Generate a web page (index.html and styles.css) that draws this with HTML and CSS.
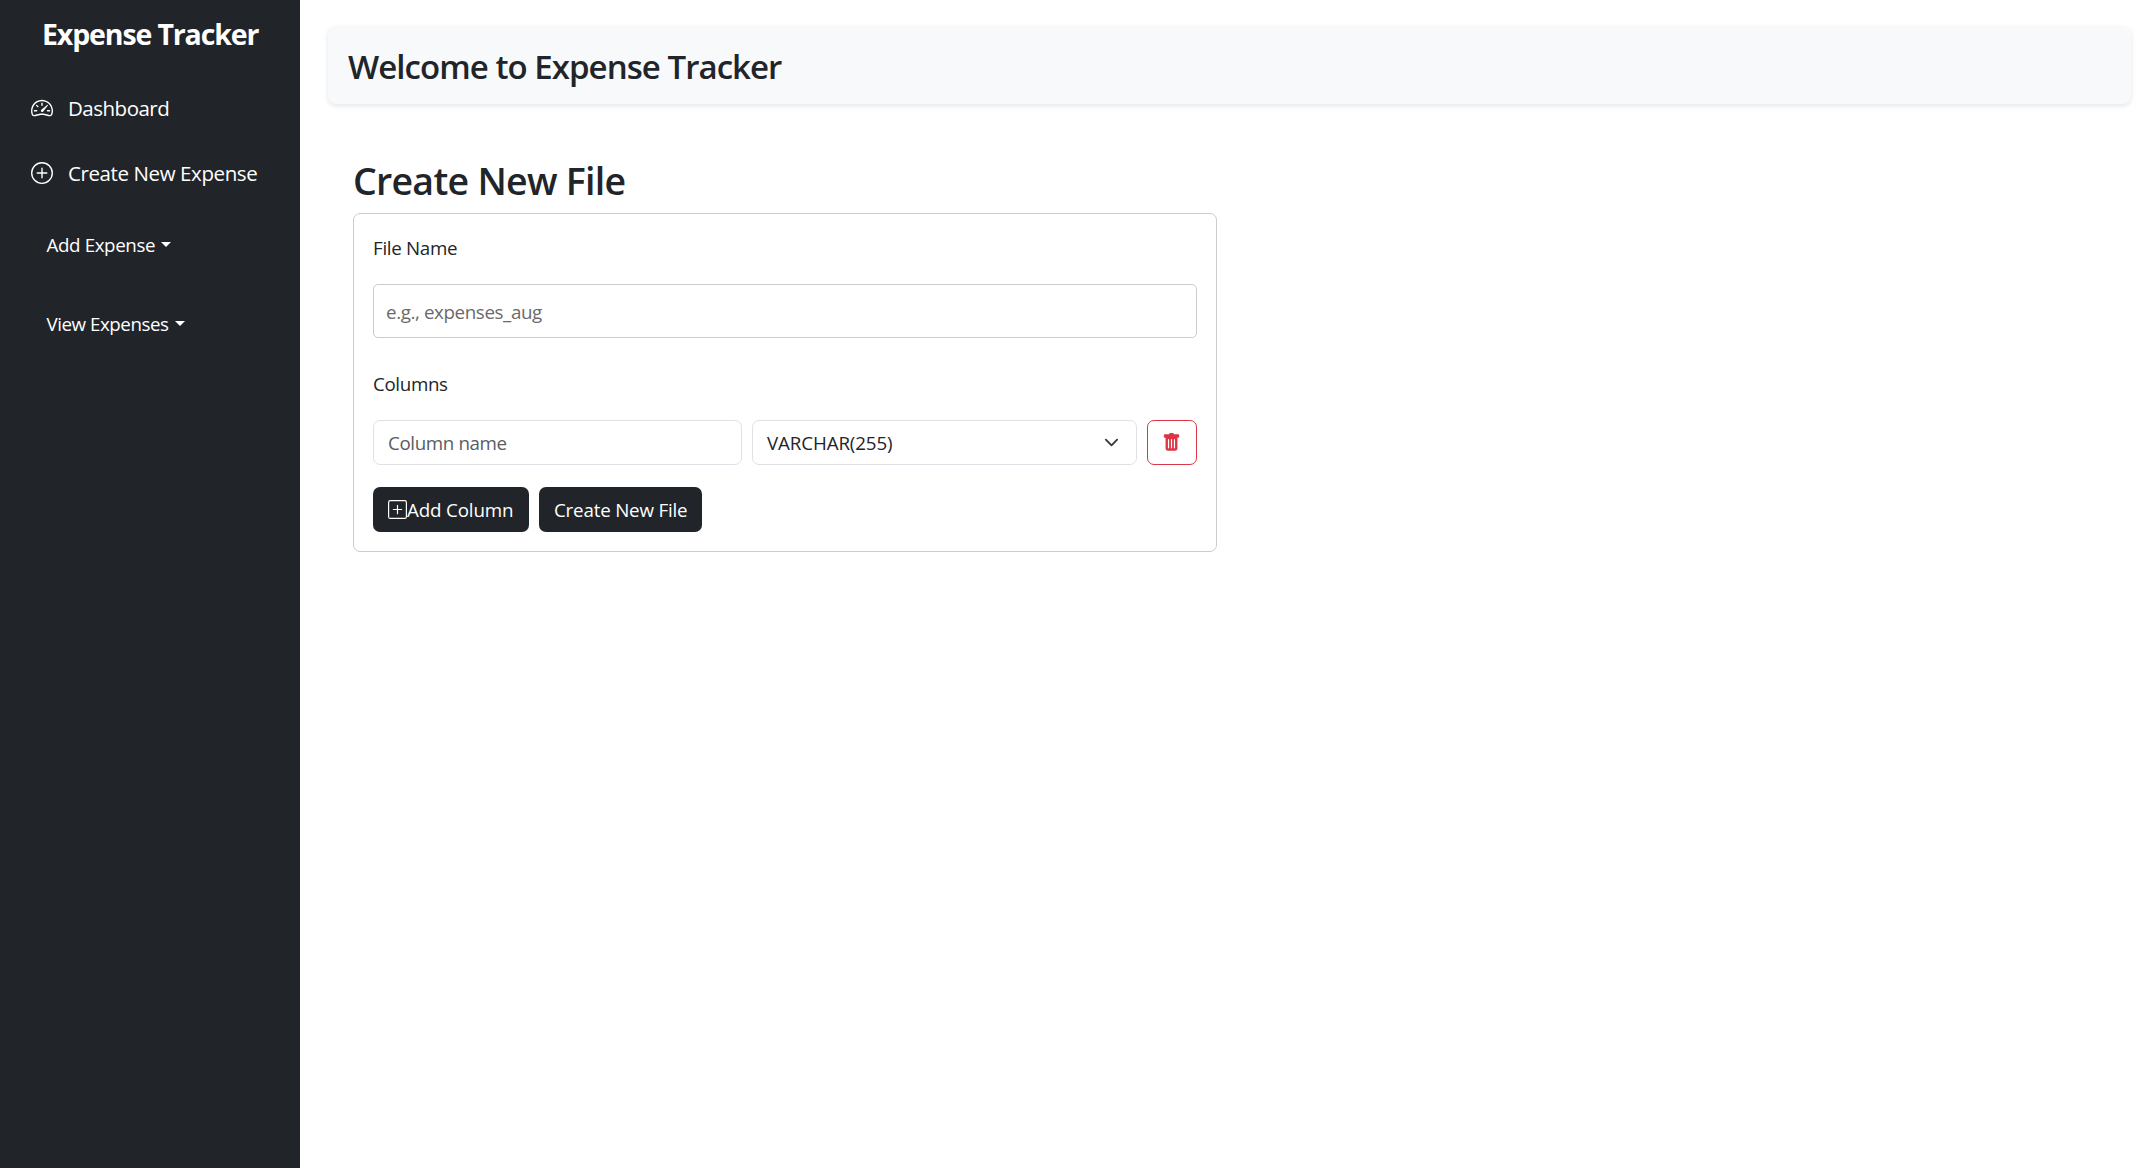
FILE: index.html
```html
<!DOCTYPE html>
<html lang="en">
<head>
<meta charset="utf-8">
<title>Expense Tracker</title>
<link rel="stylesheet" href="styles.css">
</head>
<body>
<div class="layout">
  <aside class="sidebar">
    <div class="brand">Expense Tracker</div>
    <nav class="nav">
      <a class="nav-link">
        <svg class="nav-icon" viewBox="0 0 16 16" fill="currentColor"><path d="M8 4a.5.5 0 0 1 .5.5V6a.5.5 0 0 1-1 0V4.5A.5.5 0 0 1 8 4M3.732 5.732a.5.5 0 0 1 .707 0l.915.914a.5.5 0 1 1-.708.708l-.914-.915a.5.5 0 0 1 0-.707M2 10a.5.5 0 0 1 .5-.5h1.586a.5.5 0 0 1 0 1H2.5A.5.5 0 0 1 2 10m9.5 0a.5.5 0 0 1 .5-.5h1.5a.5.5 0 0 1 0 1H12a.5.5 0 0 1-.5-.5m.754-4.246a.39.39 0 0 0-.527-.02L7.547 9.31a.91.91 0 1 0 1.302 1.258l3.434-4.297a.39.39 0 0 0-.029-.518z"/><path fill-rule="evenodd" d="M0 10a8 8 0 1 1 15.547 2.661c-.442 1.253-1.845 1.602-2.932 1.25C11.309 13.488 9.475 13 8 13c-1.474 0-3.31.488-4.615.911-1.087.352-2.49.003-2.932-1.25A8 8 0 0 1 0 10m8-7a7 7 0 0 0-6.603 9.329c.203.575.923.876 1.68.63C4.397 12.533 6.358 12 8 12s3.604.532 4.923.96c.757.245 1.477-.056 1.68-.631A7 7 0 0 0 8 3"/></svg>
        <span class="nav-dashboard">Dashboard</span>
      </a>
      <a class="nav-link">
        <svg class="nav-icon" viewBox="0 0 16 16" fill="currentColor"><path d="M8 15A7 7 0 1 1 8 1a7 7 0 0 1 0 14m0 1A8 8 0 1 0 8 0a8 8 0 0 0 0 16"/><path d="M8 4a.5.5 0 0 1 .5.5v3h3a.5.5 0 0 1 0 1h-3v3a.5.5 0 0 1-1 0v-3h-3a.5.5 0 0 1 0-1h3v-3A.5.5 0 0 1 8 4"/></svg>
        <span>Create New Expense</span>
      </a>
      <a class="dropdown-toggle">Add Expense</a>
      <a class="dropdown-toggle view">View Expenses</a>
    </nav>
  </aside>
  <main class="main">
    <header class="welcome"><h1>Welcome to Expense Tracker</h1></header>
    <section class="create">
      <h2>Create New File</h2>
      <form class="card">
        <label class="label file-label" for="file">File Name</label>
        <input class="file-input" id="file" type="text" placeholder="e.g., expenses_aug">
        <div class="label columns-label">Columns</div>
        <div class="column-row">
          <input class="column-input" type="text" placeholder="Column name">
          <div class="select">
            <span>VARCHAR(255)</span>
            <svg class="chevron" viewBox="0 0 16 16" fill="none" stroke="#343a40" stroke-width="2" stroke-linecap="round" stroke-linejoin="round"><path d="m2 5 6 6 6-6"/></svg>
          </div>
          <button class="remove" type="button" aria-label="Remove column">
            <svg class="icon" viewBox="0 0 16 16" fill="currentColor"><path d="M2.5 1a1 1 0 0 0-1 1v1a1 1 0 0 0 1 1H3v9a2 2 0 0 0 2 2h6a2 2 0 0 0 2-2V4h.5a1 1 0 0 0 1-1V2a1 1 0 0 0-1-1H10a1 1 0 0 0-1-1H7a1 1 0 0 0-1 1zm3 4a.5.5 0 0 1 .5.5v7a.5.5 0 0 1-1 0v-7a.5.5 0 0 1 .5-.5M8 5a.5.5 0 0 1 .5.5v7a.5.5 0 0 1-1 0v-7A.5.5 0 0 1 8 5m3 .5v7a.5.5 0 0 1-1 0v-7a.5.5 0 0 1 1 0"/></svg>
          </button>
        </div>
        <div class="actions">
          <button class="btn add" type="button">
            <svg class="icon" viewBox="0 0 16 16" fill="currentColor"><path d="M14 1a1 1 0 0 1 1 1v12a1 1 0 0 1-1 1H2a1 1 0 0 1-1-1V2a1 1 0 0 1 1-1zM2 0a2 2 0 0 0-2 2v12a2 2 0 0 0 2 2h12a2 2 0 0 0 2-2V2a2 2 0 0 0-2-2z"/><path d="M8 4a.5.5 0 0 1 .5.5v3h3a.5.5 0 0 1 0 1h-3v3a.5.5 0 0 1-1 0v-3h-3a.5.5 0 0 1 0-1h3v-3A.5.5 0 0 1 8 4"/></svg>
            <span>Add Column</span>
          </button>
          <button class="btn submit" type="button">Create New File</button>
        </div>
      </form>
    </section>
  </main>
</div>
</body>
</html>
```
FILE: styles.css
```css
* { box-sizing: border-box; }

body {
  margin: 0;
  background: #fff;
  color: #212529;
  font-family: "Open Sans", "Noto Sans", sans-serif;
  font-size: 18.75px;
  line-height: 28px;
}

h1, h2 { margin: 0; font-weight: 600; }

input, button {
  font: inherit;
  color: inherit;
  margin: 0;
}

.layout { display: flex; min-height: 100vh; }

.sidebar {
  width: 300px;
  flex: none;
  padding-top: 17px;
  background: #212529;
  color: #fff;
}

.brand {
  padding-left: 42px;
  font-size: 28.5px;
  font-weight: 700;
  line-height: 34px;
  letter-spacing: -1.13px;
  white-space: nowrap;
}

.nav {
  display: flex;
  flex-direction: column;
  padding-top: 24px;
}

.nav-link {
  display: flex;
  align-items: center;
  gap: 15px;
  height: 65px;
  padding-left: 31px;
  font-size: 20.5px;
  letter-spacing: -0.4px;
}

.nav-dashboard { letter-spacing: -0.5px; }

.nav-icon { width: 22px; height: 22px; }

.dropdown-toggle {
  display: flex;
  align-items: center;
  height: 79px;
  padding-left: 46.5px;
  letter-spacing: -0.38px;
}

.dropdown-toggle.view { letter-spacing: -0.46px; }

.dropdown-toggle::after {
  content: "";
  margin-left: 6px;
  border: 5.6px solid transparent;
  border-top-color: currentColor;
  border-bottom: 0;
}

.main { flex: 1; padding: 26px 25px 0 28px; }

.welcome {
  height: 78px;
  padding: 21px 20px;
  border-radius: 8px;
  background: #f8f9fb;
  box-shadow: 0 2px 5px rgba(0, 0, 0, 0.1);
}

.welcome h1 {
  font-size: 33px;
  line-height: 40px;
  letter-spacing: -0.95px;
}

.create { width: 864px; margin: 54px 0 0 25px; }

.create h2 {
  font-size: 37.5px;
  line-height: 45px;
  padding-bottom: 10px;
  letter-spacing: -0.73px;
}

.card {
  display: flex;
  flex-direction: column;
  padding: 20px 19px 19px;
  border: 1px solid #ccc;
  border-radius: 7px;
}

.label { display: block; }
.file-label { margin-bottom: 22px; letter-spacing: -0.3px; }
.columns-label { margin: 32px 0 22px; letter-spacing: -0.36px; }

input::placeholder { opacity: 1; }

.file-input {
  height: 54px;
  padding: 1px 12px 0;
  border: 1px solid #ccc;
  border-radius: 5px;
  letter-spacing: -0.39px;
}

.file-input::placeholder { color: #6a6a6a; }

.column-row { display: flex; gap: 10px; }

.column-input, .select, .remove {
  height: 45px;
  border: 1px solid #dee2e6;
  border-radius: 7px;
  background: #fff;
}

.column-input {
  width: 369px;
  padding: 0 14px;
  letter-spacing: -0.38px;
}

.column-input::placeholder { color: #595c5f; }

.select {
  display: flex;
  flex: 1;
  align-items: center;
  justify-content: space-between;
  padding: 0 17px 0 14px;
  letter-spacing: -0.12px;
}

.chevron { width: 15px; height: 15px; }

.icon { width: 19px; height: 19px; flex: none; }

.remove {
  display: flex;
  align-items: center;
  justify-content: center;
  width: 50px;
  padding: 0 1px 0 0;
  border-color: #dc3545;
  color: #dc3545;
}

.actions { display: flex; gap: 10px; margin-top: 22px; }

.btn {
  display: flex;
  align-items: center;
  height: 45px;
  padding: 0 15px;
  border: 0;
  border-radius: 7px;
  background: #212529;
  color: #fff;
  white-space: nowrap;
}

.add { width: 156px; letter-spacing: -0.15px; }
.submit { width: 163px; letter-spacing: -0.19px; }
```
